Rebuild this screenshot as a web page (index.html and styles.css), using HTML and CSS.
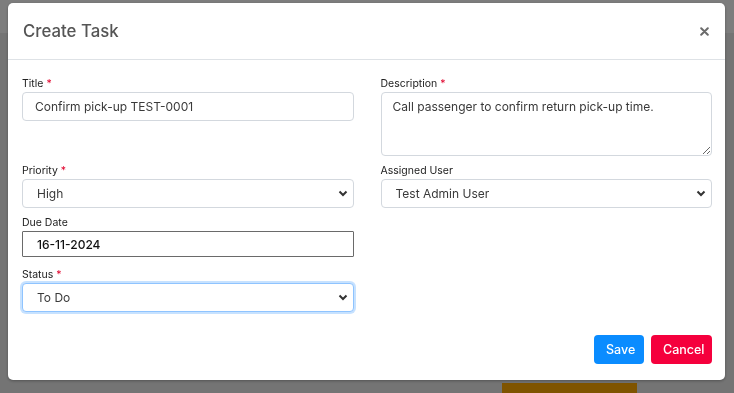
FILE: index.html
```html
<!DOCTYPE html>
<html lang="en">
<head>
    <meta charset="UTF-8">
    <meta name="viewport" content="width=device-width, initial-scale=1.0">
    <title>Create Task</title>
    <link rel="stylesheet" href="styles.css">
</head>
<body>
    <div class="page">
        <div class="topbar"></div>
        <div class="main">
            <div class="page-btn"></div>
        </div>
    </div>

    <div class="overlay">
        <div class="modal">
            <div class="modal-header">
                <h2>Create Task</h2>
                <button class="close-btn" aria-label="Close">
                    <svg width="9" height="9" viewBox="0 0 9 9"><path d="M1.2 1.2L7.8 7.8M7.8 1.2L1.2 7.8" stroke="#6b6b6b" stroke-width="2" stroke-linecap="round"/></svg>
                </button>
            </div>

            <div class="modal-body">
                <div class="form-grid">
                    <div class="field">
                        <label for="title">Title <span class="req">*</span></label>
                        <input type="text" id="title" class="control" value="Confirm pick-up TEST-0001">
                    </div>
                    <div class="field">
                        <label for="description">Description <span class="req">*</span></label>
                        <textarea id="description" class="control textarea">Call passenger to confirm return pick-up time.</textarea>
                    </div>

                    <div class="field">
                        <label for="priority">Priority <span class="req">*</span></label>
                        <div class="select-wrap">
                            <select id="priority" class="control select">
                                <option>High</option>
                                <option>Medium</option>
                                <option>Low</option>
                            </select>
                            <svg class="chevron" width="10" height="7" viewBox="0 0 10 7"><path d="M1.5 1.5L5 5L8.5 1.5" fill="none" stroke="#333" stroke-width="2"/></svg>
                        </div>
                    </div>
                    <div class="field">
                        <label for="assigned">Assigned User</label>
                        <div class="select-wrap">
                            <select id="assigned" class="control select">
                                <option>Test Admin User</option>
                            </select>
                            <svg class="chevron" width="10" height="7" viewBox="0 0 10 7"><path d="M1.5 1.5L5 5L8.5 1.5" fill="none" stroke="#333" stroke-width="2"/></svg>
                        </div>
                    </div>

                    <div class="field">
                        <label for="due">Due Date</label>
                        <input type="text" id="due" class="date-input" value="16-11-2024">
                    </div>
                    <div></div>

                    <div class="field">
                        <label for="status">Status <span class="req">*</span></label>
                        <div class="select-wrap">
                            <select id="status" class="control select focused">
                                <option>To Do</option>
                                <option>In Progress</option>
                                <option>Done</option>
                            </select>
                            <svg class="chevron" width="10" height="7" viewBox="0 0 10 7"><path d="M1.5 1.5L5 5L8.5 1.5" fill="none" stroke="#333" stroke-width="2"/></svg>
                        </div>
                    </div>
                </div>
            </div>

            <div class="modal-footer">
                <button class="btn btn-save">Save</button>
                <button class="btn btn-cancel">Cancel</button>
            </div>
        </div>
    </div>
</body>
</html>
```

FILE: styles.css
```css
* {
    box-sizing: border-box;
}
body {
    margin: 0;
    font-family: 'Inter', 'Liberation Sans', sans-serif;
    background: #e8e8e8;
    height: 100vh;
    overflow: hidden;
}
.topbar {
    height: 33px;
    background: #fafafa;
}
.main {
    padding: 350px 0 0 502px;
}
.page-btn {
    width: 135px;
    height: 10px;
    background: #ffa800;
}
.overlay {
    position: fixed;
    inset: 0;
    background: rgba(0, 0, 0, 0.5);
    padding: 3px 9px 0 8px;
}
.modal {
    background: #fff;
    border-radius: 5px;
    box-shadow: 0 1px 3px rgba(0, 0, 0, 0.3);
}
.modal-header {
    display: flex;
    justify-content: space-between;
    align-items: center;
    height: 57px;
    padding: 0 15px;
    border-bottom: 1px solid #dee2e6;
}
.modal-header h2 {
    margin: 0;
    font-size: 16.8px;
    font-weight: 500;
    color: #555;
}
.close-btn {
    background: none;
    border: none;
    padding: 0;
    display: flex;
    margin-right: 1px;
    margin-top: 1px;
}
.modal-body {
    padding: 17px 13px 0 14px;
}
.form-grid {
    display: grid;
    grid-template-columns: 1fr 1fr;
    column-gap: 27px;
    row-gap: 8px;
}
.field {
    display: flex;
    flex-direction: column;
}
label {
    font-size: 10.5px;
    line-height: 14px;
    color: #222;
    margin-bottom: 1px;
}
.req {
    color: #e0002a;
}
.control {
    font-family: inherit;
    font-size: 12px;
    color: #3a3a3a;
    height: 29px;
    padding: 0 12px;
    border: 1px solid #d3d8de;
    border-radius: 4px;
    background: #fff;
    outline: none;
    width: 100%;
}
.textarea {
    height: 64px;
    padding: 6px 11px;
    resize: vertical;
    line-height: 16px;
}
.select-wrap {
    position: relative;
}
.select {
    appearance: none;
    -webkit-appearance: none;
    padding-left: 14px;
}
.chevron {
    position: absolute;
    right: 6px;
    top: 11px;
    pointer-events: none;
}
.focused {
    border-color: #8fc4ff;
    box-shadow: 0 0 0 2px rgba(0, 123, 255, 0.22);
}
.date-input {
    font-family: inherit;
    font-size: 12px;
    font-weight: 500;
    color: #111;
    height: 26px;
    padding: 0 14px;
    border: 1px solid #6a6a6a;
    border-radius: 1px;
    outline: none;
    width: 100%;
    margin-bottom: 3px;
}
.modal-footer {
    display: flex;
    justify-content: flex-end;
    gap: 7px;
    padding: 23px 13px 16px;
}
.btn {
    font-family: inherit;
    font-size: 12.5px;
    font-weight: 500;
    color: #fff;
    border: none;
    border-radius: 4px;
    height: 29px;
    padding: 0 12px;
    cursor: pointer;
}
.btn-save {
    background: #0a8cff;
    width: 50px;
}
.btn-cancel {
    background: #f5003d;
    width: 61px;
}
```
